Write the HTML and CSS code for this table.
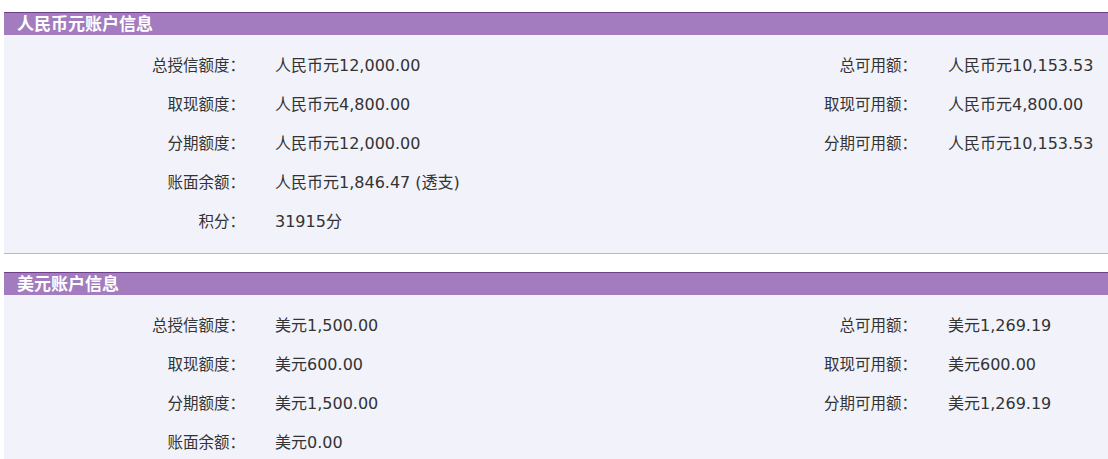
FILE: index.html
```html
<!DOCTYPE html>
<html lang="zh-CN">
<head>
    <meta charset="UTF-8">
    <title>账户信息</title>
    <link rel="stylesheet" href="styles.css">
</head>
<body>
    <div class="account">
        <h3 class="account-title">人民币元账户信息</h3>
        <div class="account-body">
            <div class="label">总授信额度：</div>
            <div class="value">人民币元12,000.00</div>
            <div class="label">总可用额：</div>
            <div class="value right">人民币元10,153.53</div>

            <div class="label">取现额度：</div>
            <div class="value">人民币元4,800.00</div>
            <div class="label">取现可用额：</div>
            <div class="value right">人民币元4,800.00</div>

            <div class="label">分期额度：</div>
            <div class="value">人民币元12,000.00</div>
            <div class="label">分期可用额：</div>
            <div class="value right">人民币元10,153.53</div>

            <div class="label">账面余额：</div>
            <div class="value wide">人民币元1,846.47 (透支)</div>

            <div class="label">积分：</div>
            <div class="value wide">31915分</div>
        </div>
    </div>

    <div class="account">
        <h3 class="account-title">美元账户信息</h3>
        <div class="account-body">
            <div class="label">总授信额度：</div>
            <div class="value">美元1,500.00</div>
            <div class="label">总可用额：</div>
            <div class="value right">美元1,269.19</div>

            <div class="label">取现额度：</div>
            <div class="value">美元600.00</div>
            <div class="label">取现可用额：</div>
            <div class="value right">美元600.00</div>

            <div class="label">分期额度：</div>
            <div class="value">美元1,500.00</div>
            <div class="label">分期可用额：</div>
            <div class="value right">美元1,269.19</div>

            <div class="label">账面余额：</div>
            <div class="value wide">美元0.00</div>
        </div>
    </div>
</body>
</html>
```

FILE: styles.css
```css
/* Global */
* {
    margin: 0;
    padding: 0;
    box-sizing: border-box;
}

body {
    font-family: "DejaVu Sans", "Noto Sans CJK SC", sans-serif;
    background-color: #fff;
    color: #333;
    padding: 12px 0 0 4px;
    overflow: hidden;
}

/* Account block */
.account {
    margin-bottom: 18px;
}

.account-title {
    background-color: #a37bbf;
    border-top: 1px solid #6e3f86;
    color: #fff;
    font-family: "Noto Sans CJK SC", sans-serif;
    font-size: 17px;
    font-weight: bold;
    height: 23px;
    line-height: 20px;
    padding-left: 13px;
}

.account-body {
    background-color: #f1f2fa;
    border-bottom: 1px solid #b9b9b9;
    padding: 9px 0 14px;
    display: grid;
    grid-template-columns: 241px 1fr 180px 191px;
    grid-auto-rows: 39px;
    align-items: center;
}

.label {
    font-family: "Noto Sans CJK SC", sans-serif;
    font-size: 15.5px;
    text-align: right;
    color: #333;
}

.value {
    font-size: 16px;
    padding-left: 30px;
    color: #333;
}

.value.right {
    padding-left: 31px;
}

.value.wide {
    grid-column: 2 / 5;
}
```
